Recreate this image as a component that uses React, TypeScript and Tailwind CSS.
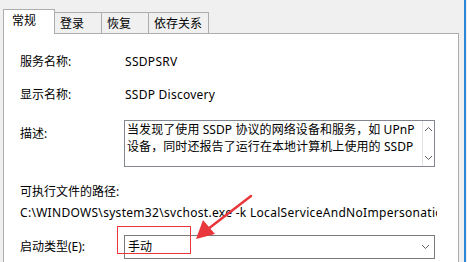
import React from 'react'

const font = { fontFamily: '"Segoe UI", "Noto Sans", "Noto Sans CJK SC", sans-serif' }

function Tab({ label, active, w }: { label: string; active?: boolean; w: string }) {
  if (active) {
    return (
      <div className="relative z-10 -mb-px h-[25px] w-[52px] border border-b-0 border-[#adadad] bg-white pl-[8px] pt-[3px] text-[12px] leading-[16px] text-black">
        {label}
      </div>
    )
  }
  return (
    <div className={`-ml-px h-[21px] border border-b-0 border-[#adadad] bg-[#f0f0f0] pl-[5px] pt-[3px] text-[12px] leading-[16px] text-black ${w}`}>
      {label}
    </div>
  )
}

function Chevron({ up }: { up?: boolean }) {
  return (
    <svg width="9" height="6" viewBox="0 0 9 6" fill="none" stroke="#606060" strokeWidth="1">
      {up ? <path d="M1 5 L4.5 1.5 L8 5" /> : <path d="M1 1 L4.5 4.5 L8 1" />}
    </svg>
  )
}

export default function App() {
  return (
    <div className="relative flex h-[262px] w-[467px] overflow-hidden bg-[#f0f0f0]" style={font}>
      <div className="flex w-[466px] flex-col border-r-2 border-[#2b88d8] pl-[3px] pr-[5px] pt-[9px]">
        {/* Tabs */}
        <div className="flex items-end">
          <Tab label="常规" active w="" />
          <Tab label="登录" w="w-[48px]" />
          <Tab label="恢复" w="w-[48px]" />
          <Tab label="依存关系" w="w-[61px]" />
        </div>

        {/* Panel */}
        <div className="flex flex-1 flex-col border border-b-0 border-[#adadad] bg-white pl-[16px] text-[12px] text-black">
          <div className="mt-[18px] flex h-[20px] items-center">
            <span className="w-[105px]">服务名称:</span>
            <span className="tracking-[0.3px]">SSDPSRV</span>
          </div>
          <div className="mt-[13px] flex h-[20px] items-center">
            <span className="w-[105px]">显示名称:</span>
            <span className="tracking-[0.25px]">SSDP Discovery</span>
          </div>

          <div className="mt-[15px] flex">
            <span className="w-[104px] pt-[6px] leading-[16px]">描述:</span>
            <div className="flex h-[47px] w-[311px] border border-[#828790]">
              <div className="flex-1 overflow-hidden pl-[2px] text-[12px] leading-[17px] tracking-[0.08px] whitespace-nowrap">
                <div>当发现了使用 SSDP 协议的网络设备和服务，如 UPnP</div>
                <div>设备，同时还报告了运行在本地计算机上使用的 SSDP</div>
              </div>
              <div className="flex w-[12px] flex-col items-center justify-between border-l border-[#e0e0e0] py-[5px]">
                <Chevron up />
                <Chevron />
              </div>
            </div>
          </div>

          <div className="mt-[17px] h-[16px] leading-[16px]">可执行文件的路径:</div>
          <div className="mt-[5px] h-[16px] w-[417px] overflow-hidden whitespace-nowrap leading-[16px] tracking-[0.3px]">
            C:\WINDOWS\system32\svchost.exe -k LocalServiceAndNoImpersonation
          </div>

          <div className="mt-[14px] flex items-center">
            <span className="w-[104px]">启动类型(E):</span>
            <div className="flex h-[24px] w-[311px] items-center justify-between border border-[#7a7a7a] pl-[3px] pr-[4px]">
              <span>手动</span>
              <Chevron />
            </div>
          </div>
        </div>
      </div>

      {/* Annotation */}
      <div className="pointer-events-none absolute left-[117px] top-[226px] h-[28px] w-[74px] border-[1.5px] border-[#e8383d]" />
      <svg className="pointer-events-none absolute left-0 top-0" width="467" height="262">
        <line x1="251" y1="196" x2="208" y2="229" stroke="#e8383d" strokeWidth="2.5" strokeLinecap="round" />
        <polygon points="196,239 203,220 215,234" fill="#e8383d" />
      </svg>
    </div>
  )
}
